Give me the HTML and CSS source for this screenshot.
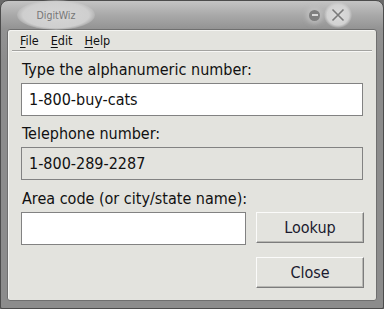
FILE: index.html
```html
<!DOCTYPE html>
<html>
<head>
<meta charset="utf-8">
<link rel="stylesheet" href="styles.css">
</head>
<body>
<div class="window">
  <div class="titlebar">
    <div class="title-glow"><span class="title">DigitWiz</span></div>
    <div class="controls">
      <span class="min-btn"><span class="dash"></span></span>
      <span class="close-btn">
        <svg width="16" height="16" viewBox="0 0 16 16"><path d="M2.5 2.5 L13.5 13.5 M13.5 2.5 L2.5 13.5" stroke="#7a7a7a" stroke-width="1.6" fill="none"/></svg>
      </span>
    </div>
  </div>
  <div class="client">
    <div class="menubar">
      <span class="menu"><u>F</u>ile</span>
      <span class="menu"><u>E</u>dit</span>
      <span class="menu"><u>H</u>elp</span>
    </div>
    <div class="form">
      <label class="label">Type the alphanumeric number:</label>
      <div class="field">1-800-buy-cats</div>
      <label class="label">Telephone number:</label>
      <div class="field readonly">1-800-289-2287</div>
      <label class="label">Area code (or city/state name):</label>
      <div class="row">
        <div class="field small"></div>
        <div class="buttons">
          <button class="btn">Lookup</button>
          <button class="btn">Close</button>
        </div>
      </div>
    </div>
  </div>
</div>
</body>
</html>
```
FILE: styles.css
```css
* { box-sizing: border-box; }
html, body { margin: 0; padding: 0; }
body { width: 384px; height: 309px; overflow: hidden; background: #6a6a6a; }

.window {
  width: 384px; height: 309px;
  border: 1px solid #4c4c4c;
  border-radius: 8px 8px 2px 2px;
  background: linear-gradient(#c4c4c4 0px, #a9a9a9 14px, #939393 28px, #8c8c8c 60px, #8c8c8c);
  display: flex; flex-direction: column;
  font-family: "DejaVu Sans Condensed", "DejaVu Sans", Verdana, sans-serif;
  font-stretch: condensed;
}

.titlebar {
  height: 28px; flex: none;
  display: flex; align-items: center; justify-content: space-between;
  position: relative;
}
.title-glow {
  margin-left: 16px;
  width: 78px; height: 30px;
  border-radius: 50%;
  background: radial-gradient(ellipse at center, #d6d6d6 0%, #cfcfcf 60%, rgba(200,200,200,0) 75%);
  display: flex; align-items: center; justify-content: center;
}
.title { font-size: 10.5px; color: #767676; }

.controls { display: flex; align-items: center; margin-right: 31px; gap: 4px; }
.min-btn {
  width: 11px; height: 11px; border-radius: 50%;
  background: #7e7e7e;
  display: flex; align-items: center; justify-content: center;
  box-shadow: 0 0 4px 3px rgba(200,200,200,0.6);
}
.min-btn .dash { width: 6px; height: 2px; background: #d8d8d8; }
.close-btn {
  width: 28px; height: 26px; border-radius: 50%;
  background: radial-gradient(ellipse at center, #dcdcdc 0%, #d2d2d2 55%, rgba(200,200,200,0) 72%);
  display: flex; align-items: center; justify-content: center;
}

.client {
  flex: 1;
  margin: 0 6px 7px 6px;
  border: 1px solid #6f6f6f;
  border-radius: 3px;
  background: #e3e3de;
  box-shadow: inset 1px 1px 0 #f4f4f1;
  display: flex; flex-direction: column;
}

.menubar {
  height: 21px; flex: none;
  display: flex; align-items: center;
  padding: 1px 0 0 8px; gap: 12px;
  font-size: 12.5px; color: #111;
  margin: 0 4px;
  border-bottom: 1px solid #a3a3a0;
  box-shadow: 0 1px 0 #f7f7f5;
}
.menubar u { text-decoration-thickness: 1px; text-underline-offset: 2px; }

.form {
  padding: 9px 13px 0 13px;
  display: flex; flex-direction: column;
  font-size: 16px; color: #111;
}
.label { height: 23px; line-height: 20px; padding-left: 1px; }
.field {
  height: 33px;
  border: 1px solid #828282;
  background: #fff;
  line-height: 31px;
  padding-left: 7px;
  margin-bottom: 8px;
}
.field.readonly { background: #e3e3de; margin-bottom: 9px; }
.row { display: flex; gap: 10px; }
.field.small { width: 225px; margin-bottom: 0; flex: none; }
.buttons { flex: 1; display: flex; flex-direction: column; gap: 14px; }
.btn {
  height: 31px; width: 108px;
  font-family: inherit; font-stretch: condensed; font-size: 16px; color: #1a1a2e;
  background: #e3e3de;
  border: 1px solid;
  border-color: #fbfbfa #7c7c7c #7c7c7c #fbfbfa;
  box-shadow: inset -1px -1px 0 #b8b8b4;
  padding: 0;
}
```
